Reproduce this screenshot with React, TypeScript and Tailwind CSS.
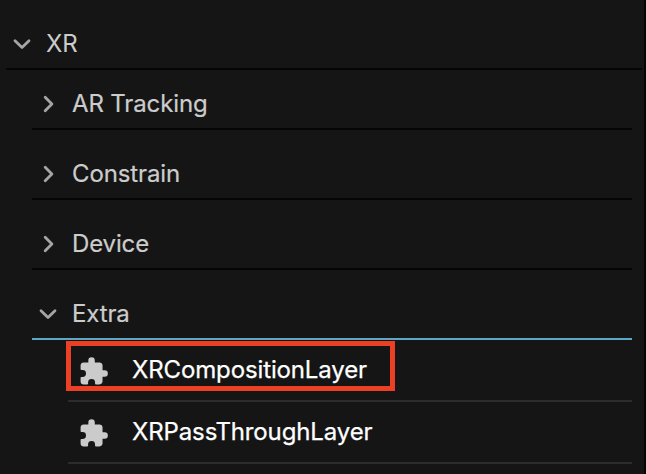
import React from "react";

function Chevron({ open }: { open: boolean }) {
  return (
    <svg width="20" height="20" viewBox="0 0 20 20" fill="none" stroke="#a5a5a5" strokeWidth="2.8" strokeLinecap="round" strokeLinejoin="round" className="shrink-0">
      <path d={open ? "M3 6.8 10 13.6 17 6.8" : "M7.2 3.2 13.9 10l-6.7 6.8"} />
    </svg>
  );
}

function Puzzle() {
  return (
    <svg width="31" height="31" viewBox="0 0 24 24" fill="#cbcbcb" className="relative top-px shrink-0">
      <path d="M20.6 11H19V7.4C19 6 18 5 16.600 5H13V3.500a2.500 2.500 0 0 0-5 0V5H4.400C3 5 2 6 2 7.400V10.200Q2 10.800 2.700 10.800H3.500a2.700 2.700 0 0 1 0 5.400H2.700Q2 16.200 2 16.900V19.700C2 21.100 3 22 4.400 22H7.100Q7.800 22 7.800 21.300V20.500a2.700 2.700 0 0 1 5.400 0V21.300Q13.200 22 13.900 22H16.600C18 22 19 21 19 19.600V16H20.600a2.500 2.500 0 0 0 0-5z" />
    </svg>
  );
}

function Group({ label, open = false }: { label: string; open?: boolean }) {
  return (
    <div className={`flex h-[70px] items-end border-b-2 pb-2 pl-1.5 ${open ? "border-[#5ba7c8]" : "border-[#050505]"}`}>
      <div className="flex h-8 items-center gap-3.5">
        <Chevron open={open} />
        <span>{label}</span>
      </div>
    </div>
  );
}

function Item({ label, selected = false }: { label: string; selected?: boolean }) {
  return (
    <div className="relative flex h-[62px] items-center gap-[23px] border-b-2 border-[#2c2c2c] pl-2.5 text-white">
      {selected && <div className="absolute -left-0.5 top-px h-[50px] w-[329px] border-[5px] border-[#ec4025]" />}
      <Puzzle />
      <span className="[-webkit-text-stroke:0.25px_white]">{label}</span>
    </div>
  );
}

export default function App() {
  return (
    <div className="h-[474px] w-[646px] overflow-hidden border-r-2 border-[#050505] bg-[#151515] font-['Inter','Liberation_Sans',sans-serif] text-2xl leading-8 tracking-[-0.13px] text-[#cccccc]">
      <div className="ml-1.5 flex h-[70px] w-[636px] items-end border-b-2 border-[#050505] pb-2 pl-1.5">
        <div className="flex h-8 items-center gap-3.5">
          <Chevron open />
          <span>XR</span>
        </div>
      </div>
      <div className="-mt-2.5 ml-8 w-[600px] [-webkit-text-stroke:0.2px_#cccccc]">
        <Group label="AR Tracking" />
        <Group label="Constrain" />
        <Group label="Device" />
        <Group label="Extra" open />
        <div className="ml-9">
          <Item label="XRCompositionLayer" selected />
          <Item label="XRPassThroughLayer" />
        </div>
      </div>
    </div>
  );
}
